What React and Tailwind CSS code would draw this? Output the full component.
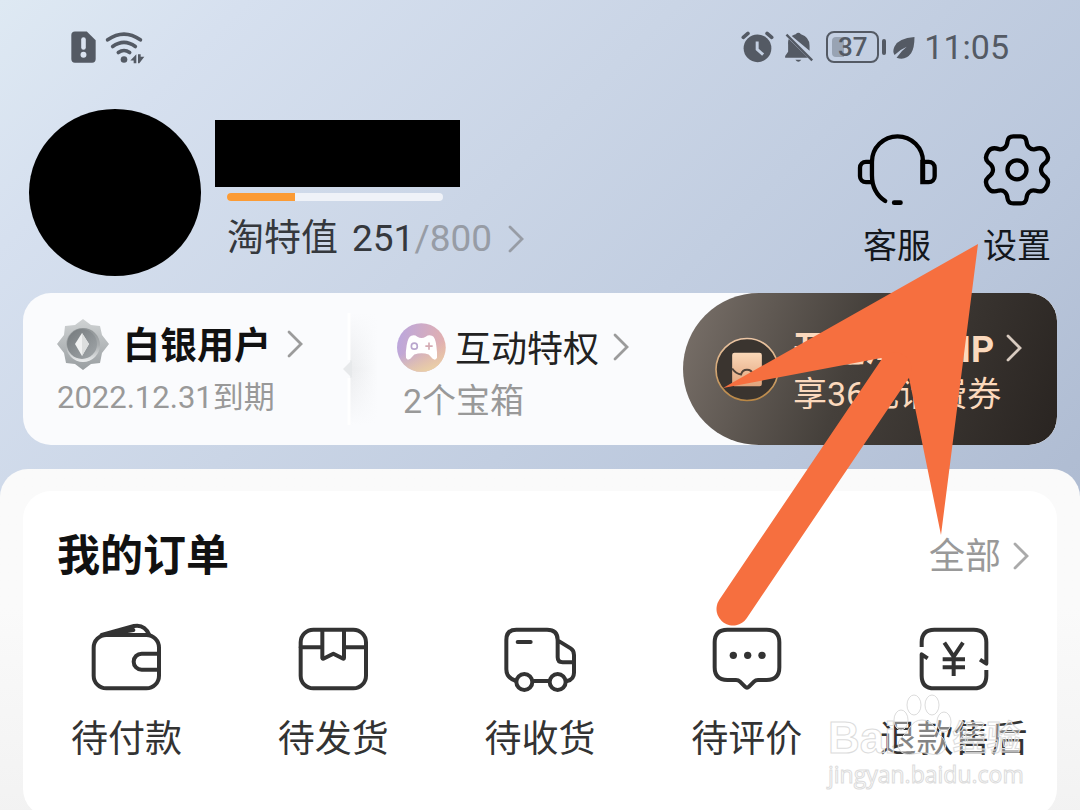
import React from "react";

function Chevron({ className }) {
  return (
    <svg viewBox="0 0 16 28" className={`h-7 w-4 shrink-0 ${className}`} fill="none" stroke="currentColor" strokeWidth="2.8" aria-hidden="true">
      <path d="M2 2 L14 14 L2 26" strokeLinecap="round" />
    </svg>
  );
}

function StatusBar() {
  return (
    <div className="flex h-[94px] shrink-0 items-center justify-between pl-[71px] pr-[71px] text-[#545a64]">
      <div className="flex items-center gap-[9px]">
        <svg viewBox="214 88 76 97" className="h-8 w-[25px]" aria-hidden="true">
          <path d="M226 89 H262 L289 116 V173 Q289 184 278 184 H226 Q215 184 215 173 V100 Q215 89 226 89Z" fill="currentColor" />
          <path d="M252 114 V138" stroke="#dae3f0" strokeWidth="14" strokeLinecap="round" />
          <circle cx="252" cy="160" r="9" fill="#dae3f0" />
        </svg>
        <svg viewBox="315 86 120 98" className="h-[33px] w-10" fill="none" stroke="currentColor" strokeWidth="11" strokeLinecap="round" aria-hidden="true">
          <path d="M323 112 Q372 78 421 112" />
          <path d="M338 132 Q372 107 406 132" />
          <path d="M355 150 Q372 138 389 150" />
          <circle cx="372" cy="171" r="10" fill="currentColor" stroke="none" />
          <path d="M409 155 V182 H401 V174 H391 Z M414 155 H422 V163 H433 L418 182 H414 Z" fill="currentColor" stroke="none" />
        </svg>
      </div>
      <div className="flex items-center">
        <svg viewBox="67 90 100 96" className="mr-[10px] h-8 w-[33px]" aria-hidden="true">
          <circle cx="117" cy="142" r="42" fill="currentColor" />
          <path d="M74 109 L88 97 M146 97 L160 109" stroke="currentColor" strokeWidth="11" strokeLinecap="round" />
          <path d="M116 121 V145 L134 161" stroke="#c3cfe1" strokeWidth="9" fill="none" />
        </svg>
        <svg viewBox="198 90 90 94" className="mr-3 h-[31px] w-[30px]" aria-hidden="true">
          <path d="M221 102 Q229 98 233 97 Q241 88 249 97 Q275 105 275 132 V147 Z M212 111 L270 168 H201 V163 L210 150 V128 Q209 118 212 111Z M232 174 H250 Q241 187 232 174Z" fill="currentColor" />
          <path d="M205 98 L283 176" stroke="currentColor" strokeWidth="7" />
        </svg>
        <div className="relative flex h-8 w-[53px] items-center justify-center rounded-lg border-[2px] border-current">
          <span className="absolute inset-y-1 left-1 w-3 rounded-l bg-[#98a3b3]" />
          <span className="relative text-[26px] font-medium leading-7">37</span>
        </div>
        <span className="ml-[3px] h-4 w-1 rounded bg-current" />
        <svg viewBox="522 104 68 68" className="ml-[6px] h-[23px] w-6" aria-hidden="true">
          <path d="M587 107 Q540 110 528 135 Q521 150 528 160 Q543 145 564 136 Q548 148 534 168 Q560 178 577 155 Q587 140 587 107Z" fill="currentColor" />
        </svg>
        <time className="ml-2 text-[34px] leading-10">11:05</time>
      </div>
    </div>
  );
}

function ProfileHeader() {
  return (
    <header className="flex h-[199px] shrink-0 items-start pl-[29px] pr-[29px]">
      <div className="mt-[15px] h-[167px] w-[172px] shrink-0 rounded-[50%] bg-black" />
      <div className="ml-[14px] mt-[26px]">
        <div className="h-[67px] w-[245px] bg-black" />
        <div className="ml-3 mt-[6px] h-2 w-[216px] overflow-hidden rounded-full bg-[#eff2f8]" role="progressbar" aria-label="淘特值" aria-valuenow={251} aria-valuemax={800}>
          <div className="h-full bg-[#fb9b35]" style={{ width: `${(251 / 800) * 100}%` }} />
        </div>
        <button className="ml-3 mt-4 flex items-center text-[37px] leading-[44px] text-[#35383d]">
          <span>淘特值</span>
          <span className="ml-[14px]">251</span>
          <span className="text-[#979ca5]">/800</span>
          <Chevron className="ml-4 text-[#979ca5]" />
        </button>
      </div>
      <nav className="ml-auto mt-[39px] flex gap-[46px] text-[34px] leading-10 text-[#14171c]">
        <button className="flex w-20 flex-col items-center gap-5">
          <svg viewBox="408 398 244 220" className="h-[73px] w-[81px]" fill="none" stroke="#000" strokeWidth="13" strokeLinecap="round" aria-hidden="true">
            <path d="M493 603 C466 585 453 555 453 525 V485 A77 77 0 0 1 607 485 V540" />
            <path d="M453 485 H435 A18 18 0 0 0 417 503 V528 A18 18 0 0 0 435 546 H453" />
            <path d="M605 485 H624 A18 18 0 0 1 642 503 V528 A18 18 0 0 1 624 546 H605Z" />
            <path d="M520 608 H539" strokeWidth="14" />
          </svg>
          客服
        </button>
        <button className="flex w-[68px] flex-col items-center gap-5">
          <svg viewBox="785 398 208 222" className="h-[73px] w-[70px]" fill="none" stroke="#000" strokeWidth="13" aria-hidden="true">
            <path d="M878 408 H900 C912 408 917 414 918 424 C919 440 930 450 944 447 C958 442 968 442 976 454 C986 468 985 480 976 488 C966 495 962 501 962 510 C962 519 966 525 976 532 C985 540 986 552 976 566 C968 578 958 578 944 573 C930 570 919 580 918 596 C917 606 912 612 900 612 H878 C866 612 861 606 860 596 C859 580 848 570 834 573 C820 578 810 578 802 566 C792 552 793 540 802 532 C812 525 816 519 816 510 C816 501 812 495 802 488 C793 480 792 468 802 454 C810 442 820 442 834 447 C848 450 859 440 860 424 C861 414 866 408 878 408Z" />
            <circle cx="889" cy="510" r="29" />
          </svg>
          设置
        </button>
      </nav>
    </header>
  );
}

function MedalIcon() {
  return (
    <svg viewBox="0 0 52 52" className="h-[52px] w-[52px] shrink-0" aria-hidden="true">
      <defs>
        <linearGradient id="medal" x1="0" y1="0" x2="0" y2="1">
          <stop offset="0" stopColor="#d0d3d4" />
          <stop offset="1" stopColor="#999ea1" />
        </linearGradient>
        <linearGradient id="medalCore" x1="0" y1="0" x2="1" y2="1">
          <stop offset="0" stopColor="#74797c" />
          <stop offset="1" stopColor="#a2a7aa" />
        </linearGradient>
        <linearGradient id="medalRim" x1="0" y1="0" x2="0" y2="1">
          <stop offset="0" stopColor="#8f9496" />
          <stop offset="0.5" stopColor="#a9adaf" />
          <stop offset="1" stopColor="#eceeef" />
        </linearGradient>
      </defs>
      <path d="M26 1 L34 7 L43 8 L45 17 L52 26 L45 35 L43 45 L34 46 L26 52 L18 46 L9 45 L7 35 L0 26 L7 17 L8 8 L18 7Z" fill="url(#medal)" />
      <circle cx="26" cy="27" r="17" fill="url(#medalRim)" />
      <circle cx="25" cy="26" r="15" fill="url(#medalCore)" />
      <path d="M25 15 L32 26 L25 38 L18 26Z" fill="#f0f1f1" />
      <path d="M25 15 L32 26 L25 38Z" fill="#dcdede" />
    </svg>
  );
}

function GamepadIcon() {
  return (
    <svg viewBox="171 128 147 146" className="h-[49px] w-[49px] shrink-0" aria-hidden="true">
      <defs>
        <linearGradient id="pad" x1="0" y1="0.2" x2="1" y2="0.4">
          <stop offset="0" stopColor="#baa6de" />
          <stop offset="1" stopColor="#e3b0ae" />
        </linearGradient>
        <linearGradient id="padGlow" x1="0.4" y1="0.4" x2="0.6" y2="1">
          <stop offset="0.2" stopColor="#e8cba5" stopOpacity="0" />
          <stop offset="1" stopColor="#ead0a6" />
        </linearGradient>
      </defs>
      <circle cx="244" cy="201" r="73" fill="url(#pad)" />
      <circle cx="244" cy="201" r="73" fill="url(#padGlow)" />
      <path d="M214 166 Q224 162 232 169 Q245 176 257 169 Q266 162 276 166 Q286 170 289 196 Q292 216 291 232 Q287 241 278 235 L266 222 Q245 215 223 222 L211 235 Q201 241 198 232 Q196 216 200 194 Q204 170 214 166Z" fill="#fff" />
      <circle cx="223" cy="197" r="9" fill="none" stroke="#b9a6cd" strokeWidth="5" />
      <path d="M267 186 V208 M256 197 H278" stroke="#d5abb3" strokeWidth="5" />
    </svg>
  );
}

function CouponIcon() {
  return (
    <svg viewBox="134 172 194 196" className="h-[65px] w-16 shrink-0" aria-hidden="true">
      <defs>
        <linearGradient id="ring" x1="0" y1="0" x2="0" y2="1">
          <stop offset="0" stopColor="#ecc6a5" />
          <stop offset="1" stopColor="#b98745" />
        </linearGradient>
        <linearGradient id="ticket" x1="0" y1="0" x2="0" y2="1">
          <stop offset="0" stopColor="#fbd8b8" />
          <stop offset="1" stopColor="#e0a47c" />
        </linearGradient>
      </defs>
      <circle cx="231" cy="270" r="94" fill="#3a342f" stroke="url(#ring)" strokeWidth="5" />
      <rect x="186" y="219" width="90" height="102" rx="7" fill="url(#ticket)" />
      <path d="M186 267 Q198 284 213 285 Q217 271 231 271 Q245 271 249 285 Q264 284 276 267" fill="none" stroke="#51443a" strokeWidth="6" />
    </svg>
  );
}

function MemberCard() {
  return (
    <section className="mx-[23px] grid h-[152px] shrink-0 grid-cols-[327fr_333fr_374fr] overflow-hidden rounded-[28px] bg-[#fafbfd]">
      <button className="flex flex-col items-start pl-[34px] pt-[25px] text-left">
        <span className="flex h-[52px] items-center">
          <MedalIcon />
          <strong className="ml-[14px] pt-[6px] text-[37px] leading-[46px] text-[#111]">白银用户</strong>
          <Chevron className="ml-4 text-[#9b9b9b]" />
        </span>
        <span className="mt-[6px] text-[31px] leading-[44px] text-[#999]">2022.12.31到期</span>
      </button>
      <div className="flex">
        <svg viewBox="0 0 36 112" className="-ml-2 mt-5 h-28 w-9 shrink-0" aria-hidden="true">
          <defs>
            <linearGradient id="fold" x1="0" y1="0" x2="1" y2="0">
              <stop offset="0" stopColor="#ebecee" />
              <stop offset="1" stopColor="#fafbfd" />
            </linearGradient>
            <linearGradient id="foldFade" x1="0" y1="0" x2="0" y2="1">
              <stop offset="0" stopColor="#fafbfd" />
              <stop offset="0.5" stopColor="#fafbfd" stopOpacity="0" />
              <stop offset="1" stopColor="#fafbfd" />
            </linearGradient>
          </defs>
          <path d="M8 0 H36 V112 H8Z" fill="url(#fold)" />
          <path d="M8 0 H36 V112 H8Z" fill="url(#foldFade)" />
          <path d="M10 47 L1 56 L10 65Z" fill="#e7e9eb" />
          <path d="M7 0 V47 M7 65 V112" stroke="#fff" strokeWidth="3" />
        </svg>
        <button className="ml-[19px] flex flex-col items-start pt-7 text-left">
          <span className="flex h-[52px] items-center">
            <GamepadIcon />
            <span className="ml-[9px] pt-[6px] text-[36px] leading-[46px] text-[#222]">互动特权</span>
            <Chevron className="ml-[14px] text-[#9b9b9b]" />
          </span>
          <span className="ml-[6px] mt-[6px] text-[34px] leading-[44px] text-[#999]">2个宝箱</span>
        </button>
      </div>
      <button className="flex items-center rounded-l-[76px] rounded-r-[28px] bg-linear-110 from-[#7b726b] via-[#45403b] via-45% to-[#292421] pl-8 text-left text-[#fbd9bd]">
        <CouponIcon />
        <span className="ml-[14px] flex flex-col">
          <span className="flex items-center">
            <strong className="pt-1 text-[36px] leading-[46px]">开通淘特VIP</strong>
            <Chevron className="ml-3 text-[#d8cbc0]" />
          </span>
          <span className="text-[34px] leading-[42px]">享36元话费券</span>
        </span>
      </button>
    </section>
  );
}

const orders = [
  {
    label: "待付款",
    viewBox: "270 516 216 210",
    icon: (
      <>
        <rect x="281" y="555" width="196" height="160" rx="38" />
        <path d="M305 555 L402 528 Q434 522 448 555 M345 549 L400 540 M477 611 H425 A24 24 0 0 0 425 659 H477" />
      </>
    ),
  },
  {
    label: "待发货",
    viewBox: "891 516 216 210",
    icon: (
      <>
        <rect x="902" y="539" width="196" height="176" rx="38" />
        <path d="M902 592 H965 M1034 592 H1098 M967 540 V624 Q968 628 973 625 L1000 611 L1027 625 Q1032 628 1032 624 V540" />
      </>
    ),
  },
  {
    label: "待收货",
    viewBox: "311 66 216 210",
    icon: (
      <>
        <path d="M347 243 Q318 234 318 208 V120 Q318 89 348 89 H440 Q472 89 472 120 V172 Q472 187 487 187 H521 M472 121 L511 145 Q521 151 521 165 V218 Q521 238 500 243 M401 243 H445 M352 126 H391" />
        <circle cx="372" cy="246" r="24" />
        <circle cx="472" cy="246" r="24" />
      </>
    ),
  },
  {
    label: "待评价",
    viewBox: "933 66 216 210",
    icon: (
      <>
        <path d="M982 89 H1100 Q1138 89 1138 127 V202 Q1138 240 1100 240 H1074 Q1067 240 1062 245 L1047 260 Q1041 266 1035 260 L1020 245 Q1015 240 1008 240 H982 Q944 240 944 202 V127 Q944 89 982 89Z" />
        <g fill="currentColor" stroke="none">
          <circle cx="1000" cy="166" r="11" />
          <circle cx="1043" cy="166" r="11" />
          <circle cx="1086" cy="166" r="11" />
        </g>
      </>
    ),
  },
  {
    label: "退款售后",
    viewBox: "414 366 216 210",
    icon: (
      <>
        <path d="M425 441 V427 Q425 389 463 389 H581 Q619 389 619 427 V491 L600 479 M619 510 V527 Q619 565 581 565 H463 Q425 565 425 527 V463 L443 475" strokeLinecap="butt" />
        <path d="M493 428 L521 470 L549 428 M521 468 V528 M488 478 H555 M488 502 H555" strokeLinecap="butt" />
      </>
    ),
  },
];

function Orders() {
  return (
    <main className="mt-6 flex-1 shrink-0 rounded-t-[28px] bg-linear-to-b from-[#fafafa] from-40% to-[#f2f2f2] px-[23px] pt-[22px]">
      <section className="h-[326px] rounded-[28px] bg-white pt-9">
        <div className="flex items-center justify-between pl-[34px] pr-7">
          <h2 className="text-[43px] font-bold leading-[58px] text-[#111]">我的订单</h2>
          <button className="flex items-center text-[36px] leading-[44px] text-[#999]">
            <span className="pt-[2px]">全部</span>
            <Chevron className="ml-3 text-[#aaa]" />
          </button>
        </div>
        <div className="mt-[37px] grid grid-cols-5">
          {orders.map((o) => (
            <button key={o.label} className="flex flex-col items-center gap-[26px] whitespace-nowrap text-[37px] leading-[44px] text-[#333]">
              <svg viewBox={o.viewBox} className="h-[70px] w-[72px]" fill="none" stroke="currentColor" strokeWidth="12" strokeLinecap="round" strokeLinejoin="round" aria-hidden="true">
                {o.icon}
              </svg>
              {o.label}
            </button>
          ))}
        </div>
      </section>
    </main>
  );
}

function PointerArrow() {
  return (
    <svg viewBox="0 0 264 384" className="pointer-events-none absolute left-[716px] top-[243px] h-96 w-[264px]" fill="#f66f3f" aria-hidden="true">
      <path d="M262 1 L7 145 L165 115 L193 135 L225 292Z" />
      <path d="M17 366 L179 126" stroke="#f66f3f" strokeWidth="33" strokeLinecap="round" />
    </svg>
  );
}

function Watermark() {
  return (
    <div className="pointer-events-none absolute right-[54px] top-[692px] w-[198px] whitespace-nowrap font-['Liberation_Sans','Noto_Sans_CJK_SC',sans-serif] font-bold text-white/40 [-webkit-text-stroke:1px_#dcdcdc]">
      <div className="flex items-end">
        <span className="text-[44px] leading-[40px]">Bai</span>
        <svg viewBox="0 0 60 66" className="-ml-1 h-[66px] w-[60px] shrink-0" fill="#ffffff66" stroke="#dcdcdc" aria-hidden="true">
          <ellipse cx="9" cy="28" rx="7" ry="10" />
          <ellipse cx="22" cy="13" rx="7" ry="10" />
          <ellipse cx="40" cy="13" rx="7" ry="10" />
          <ellipse cx="52" cy="30" rx="7" ry="10" />
          <path d="M30 28 C42 28 42 38 50 45 C59 55 50 65 39 62 Q30 59 21 62 C9 65 1 54 10 45 C18 38 19 28 30 28Z" />
        </svg>
        <span className="text-[34px] leading-[40px]">经验</span>
      </div>
      <div className="font-['Open_Sans',sans-serif] text-[23px] font-normal leading-8">jingyan.baidu.com</div>
    </div>
  );
}

export default function App() {
  return (
    <div className="relative flex h-screen flex-col overflow-hidden bg-[linear-gradient(135deg,#dee9f3_0%,#d6e0ef_13%,#cad5e6_36%,#bac7dc_65%,#b0bdd3_81%,#a8b5cc_100%)] font-['Roboto','Noto_Sans_CJK_SC',sans-serif]">
      <StatusBar />
      <ProfileHeader />
      <MemberCard />
      <Orders />
      <PointerArrow />
      <Watermark />
    </div>
  );
}
